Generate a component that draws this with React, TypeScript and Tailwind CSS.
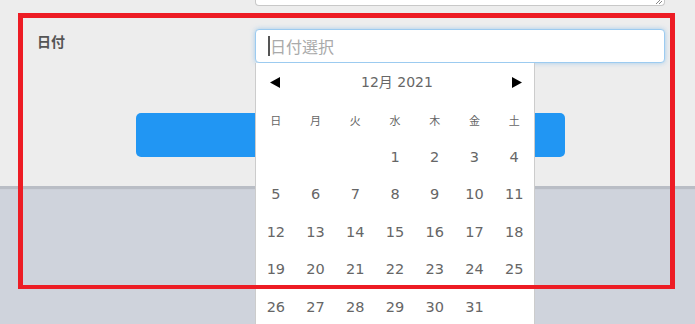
import React from "react";

const days = ["日", "月", "火", "水", "木", "金", "土"];
const cells: (number | null)[] = [null, null, null, ...Array.from({ length: 31 }, (_, i) => i + 1)];
while (cells.length % 7) cells.push(null);
const weeks: (number | null)[][] = [];
for (let i = 0; i < cells.length; i += 7) weeks.push(cells.slice(i, i + 7));

export default function App() {
  return (
    <div
      className="relative w-[695px] h-[324px] overflow-hidden bg-[#cfd3dc]"
      style={{ fontFamily: '"DejaVu Sans", "Noto Sans CJK JP", sans-serif' }}
    >
      <div className="relative h-[186px] bg-[#ededed] shadow-[0_3px_1px_rgba(0,0,0,0.1)]">
        {/* textarea bottom */}
        <div className="relative ml-[255px] w-[410px] h-[6px] bg-white border-x border-b border-[#c8c8c8] rounded-b-[4px]">
          <svg className="absolute right-[2px] bottom-[1px]" width="8" height="6" viewBox="0 0 8 6">
            <line x1="2" y1="6" x2="8" y2="0" stroke="#888" strokeWidth="1" />
            <line x1="5" y1="6" x2="8" y2="3" stroke="#888" strokeWidth="1" />
          </svg>
        </div>

        <div className="flex mt-[23px]">
          <div className="w-[255px] pl-[37px] pt-[3px] text-[14px] font-bold text-[#555]">日付</div>
          <div className="relative w-[410px] h-[34px] z-10">
            <div className="flex items-center h-full bg-white border border-[#9ccbf0] rounded-[4px] shadow-[0_0_5px_rgba(102,175,233,0.55)] pl-[12px]">
              <span className="w-[2px] h-[20px] bg-[#555]" />
              <span className="text-[16px] text-[#aaa] leading-none" style={{ fontFamily: '"Noto Sans CJK JP", sans-serif' }}>日付選択</span>
            </div>
            <div className="absolute left-0 top-full w-[280px] h-[270px] bg-white border-x border-[#cccccc]">
              <div className="flex items-center justify-between h-[38px] pl-[14px] pr-[12px]">
                <svg width="10" height="11" viewBox="0 0 10 11">
                  <polygon points="10,0 10,11 0,5.5" fill="#000" />
                </svg>
                <span className="text-[14px] text-[#666] pl-[2px]">
                  12<span style={{ fontFamily: '"Noto Sans CJK JP", sans-serif' }}>月</span> 2021
                </span>
                <svg width="10" height="11" viewBox="0 0 10 11">
                  <polygon points="0,0 0,11 10,5.5" fill="#000" />
                </svg>
              </div>
              <div className="grid grid-cols-7 h-[38px] items-center">
                {days.map((d) => (
                  <div key={d} className="text-center text-[11px] text-[#666]" style={{ fontFamily: '"Noto Sans CJK JP", sans-serif' }}>
                    {d}
                  </div>
                ))}
              </div>
              {weeks.map((w, i) => (
                <div key={i} className="grid grid-cols-7 h-[37.5px] items-center">
                  {w.map((n, j) => (
                    <div key={j} className="text-center text-[14.5px] text-[#666]">
                      {n ?? ""}
                    </div>
                  ))}
                </div>
              ))}
            </div>
          </div>
        </div>

        <div className="ml-[136px] mt-[50px] w-[429px] h-[44px] bg-[#2196f3] rounded-[5px]" />
      </div>

      <div className="absolute left-[18px] top-[13px] w-[657px] h-[276px] border-[5px] border-b-[4px] border-[#ed1c24] z-20 pointer-events-none" />
    </div>
  );
}
